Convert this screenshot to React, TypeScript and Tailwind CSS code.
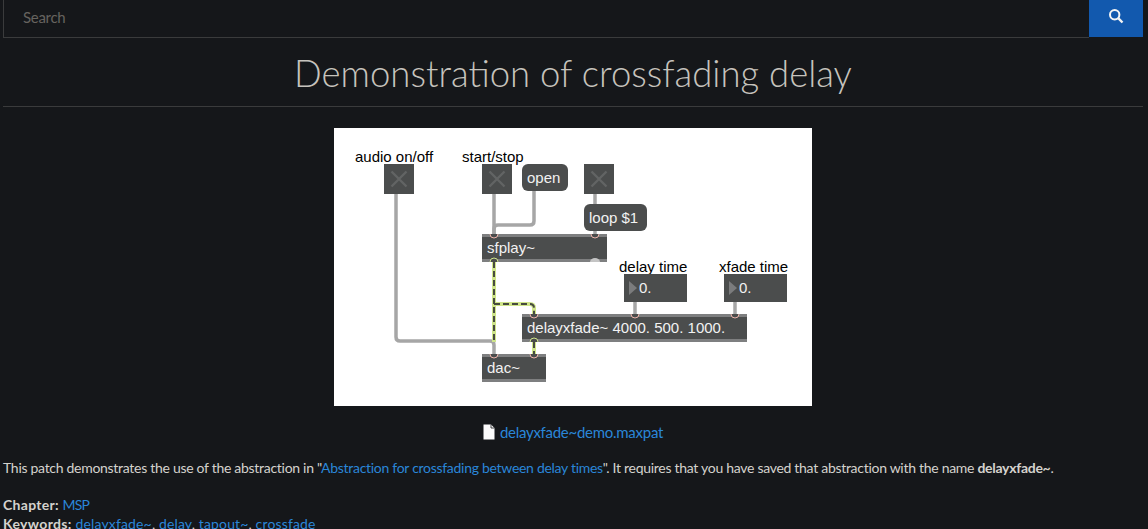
import { ReactNode } from "react";

const sans = "font-['Lato','Noto_Sans',sans-serif]";

function Toggle({ className }: { className: string }) {
  return (
    <div className={`absolute w-[30px] h-[30px] bg-[#4b4d4d] ${className}`}>
      <svg width="30" height="30" viewBox="0 0 30 30">
        <path d="M7.5 7.5 L22.5 22.5 M22.5 7.5 L7.5 22.5" stroke="#626464" strokeWidth="2.4" fill="none" />
      </svg>
    </div>
  );
}

function Label({ className, children }: { className: string; children: ReactNode }) {
  return <div className={`absolute text-[15px] leading-[16px] text-black whitespace-nowrap ${className}`}>{children}</div>;
}

function Message({ className, children }: { className: string; children: ReactNode }) {
  return (
    <div className={`absolute flex items-center pl-[5px] pt-[1px] rounded-[6px] bg-[#4b4d4d] text-[15px] text-[#f2f2f2] ${className}`}>
      {children}
    </div>
  );
}

function Obj({ className, children }: { className: string; children: ReactNode }) {
  return (
    <div className={`absolute flex flex-col bg-[#4b4d4d] text-[15px] text-[#f2f2f2] ${className}`}>
      <div className="h-[5px] bg-[#7e7f80]" />
      <div className="flex-1 flex items-center pl-[5px] whitespace-nowrap">{children}</div>
      <div className="h-[5px] bg-[#7e7f80]" />
    </div>
  );
}

function NumBox({ className }: { className: string }) {
  return (
    <div className={`absolute w-[63px] h-[28px] flex items-center gap-[2px] pl-[5px] bg-[#4b4d4d] text-[15px] text-[#f2f2f2] ${className}`}>
      <svg width="8" height="14" viewBox="0 0 8 14">
        <path d="M0 0 L8 7 L0 14 Z" fill="#7b7c7d" />
      </svg>
      <span>0.</span>
    </div>
  );
}

// wires and ports, in the patch's own coordinates
function Wires() {
  const inlets = [
    [160, 106],
    [261, 106],
    [301, 186],
    [401, 186],
    [200, 186],
    [160, 226],
    [200, 226],
  ];
  return (
    <svg className="absolute inset-0 z-10 pointer-events-none" width="478" height="278" viewBox="0 0 478 278">
      <g fill="none" stroke="#a6a6a6" strokeWidth="3.5">
        <path d="M62 66 V209 Q62 213 66 213 H156 Q160 213 160 217 V226" />
        <path d="M160 66 V106" />
        <path d="M200 63 V93 Q200 97 196 97 H164 Q160 97 160 101 V106" />
        <path d="M261 66 V76 M261 103 V106" />
        <path d="M301 174 V186 M401 174 V186" />
      </g>
      <g fill="none" stroke="#cfe58a" strokeWidth="4">
        <path d="M160 134 V214" />
        <path d="M160 176 H196 Q200 176 200 180 V186" />
        <path d="M200 214 V226" />
      </g>
      <g fill="none" stroke="#474b40" strokeWidth="2" strokeDasharray="6 3">
        <path d="M160 134 V214" />
        <path d="M160 176 H196 Q200 176 200 180 V186" />
        <path d="M200 214 V226" />
      </g>
      {inlets.map(([x, y]) => (
        <path key={`${x}-${y}`} d={`M${x - 4} ${y} A4 4 0 0 0 ${x + 4} ${y}`} fill="#4b4d4d" stroke="#eeb3aa" strokeWidth="1" />
      ))}
      <path d="M156 134 A4 4 0 0 1 164 134" fill="#4b4d4d" stroke="#cfe58a" strokeWidth="1" />
      <path d="M196 214 A4 4 0 0 1 204 214" fill="#4b4d4d" stroke="#cfe58a" strokeWidth="1" />
      <path d="M256 134 A5 4 0 0 1 266 134 Z" fill="#c4c4c4" />
    </svg>
  );
}

function Patch() {
  return (
    <div className="relative w-[478px] h-[278px] bg-white font-['Liberation_Sans',Arial,sans-serif] overflow-hidden">
      <Label className="left-[21px] top-[21px]">audio on/off</Label>
      <Label className="left-[128px] top-[21px]">start/stop</Label>
      <Label className="left-[285px] top-[131px]">delay time</Label>
      <Label className="left-[385px] top-[131px]">xfade time</Label>
      <Toggle className="left-[50px] top-[36px]" />
      <Toggle className="left-[148px] top-[36px]" />
      <Toggle className="left-[250px] top-[36px]" />
      <Message className="left-[188px] top-[36px] w-[46px] h-[27px]">open</Message>
      <Message className="left-[250px] top-[76px] w-[63px] h-[27px]">loop $1</Message>
      <Obj className="left-[148px] top-[106px] w-[125px] h-[28px]">sfplay~</Obj>
      <NumBox className="left-[290px] top-[146px]" />
      <NumBox className="left-[390px] top-[146px]" />
      <Obj className="left-[188px] top-[186px] w-[225px] h-[28px]">delayxfade~ 4000. 500. 1000.</Obj>
      <Obj className="left-[148px] top-[226px] w-[64px] h-[28px]">dac~</Obj>
      <Wires />
    </div>
  );
}

export default function App() {
  return (
    <div className={`h-[529px] overflow-hidden bg-[#15171a] text-[#d4d2cd] text-[14px] px-[3px] ${sans}`}>
      <div className="mr-[2px] flex h-[38px] items-start">
        <div className="flex-1 h-[38px] flex items-center pl-[19px] pb-[3px] border-l border-b border-[#3a3b3c] text-[15px] tracking-[-0.3px] text-[#66635f]">
          Search
        </div>
        <button className="w-[54px] h-[37px] pb-[5px] flex items-center justify-center bg-[#1259ae]">
          <svg width="16" height="16" viewBox="0 0 16 16" fill="none" stroke="#f4f4f4">
            <circle cx="6.7" cy="6.7" r="4.7" strokeWidth="2" />
            <path d="M10.2 10.2 L14.5 14.5" strokeWidth="2.4" />
          </svg>
        </button>
      </div>
      <h1 className="mr-[2px] h-[69px] pt-[2px] flex items-center justify-center border-b border-[#3a3b3c] text-[36.5px] font-light text-[#c6c3bd]">
        Demonstration of crossfading delay
      </h1>
      <div className="mt-[21px] flex justify-center mr-[2px]">
        <Patch />
      </div>
      <div className="mt-[16px] h-[20px] flex items-center justify-center gap-[5px] mr-[2px] text-[15px] tracking-[-0.27px] text-[#2a86d8]">
        <svg width="12" height="16" viewBox="0 0 12 16">
          <path d="M0.5 0.5 H8 L11.5 4 V15.5 H0.5 Z" fill="#fbfbfb" />
          <path d="M8 0.5 V4 H11.5" fill="none" stroke="#15171a" strokeWidth="0.8" />
        </svg>
        <a>delayxfade~demo.maxpat</a>
      </div>
      <p className="mt-[16px] leading-[20px] whitespace-nowrap tracking-[-0.29px]">
        This patch demonstrates the use of the abstraction in "
        <a className="text-[#2a86d8]">Abstraction for crossfading between delay times</a>". It requires that you have saved that
        abstraction with the name <b>delayxfade~</b>.
      </p>
      <p className="mt-[17px] leading-[19px]">
        <b className="tracking-[0.3px]">Chapter:</b> <a className="text-[#2a86d8] tracking-[-0.8px]">MSP</a>
      </p>
      <p className="leading-[20px] tracking-[0.15px]">
        <b className="tracking-[0.35px]">Keywords:</b>{" "}
        <a className="text-[#2a86d8]">delayxfade~</a>, <a className="text-[#2a86d8]">delay</a>,{" "}
        <a className="text-[#2a86d8]">tapout~</a>, <a className="text-[#2a86d8]">crossfade</a>
      </p>
    </div>
  );
}
